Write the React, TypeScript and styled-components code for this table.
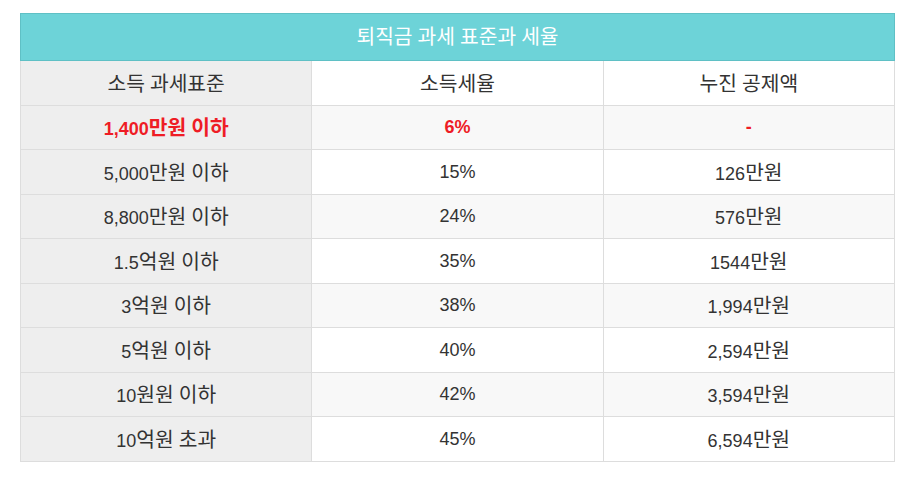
import styled, { createGlobalStyle } from 'styled-components';

const GlobalStyle = createGlobalStyle`
    body {
        margin: 0;
        background: #ffffff;
        font-family: "Liberation Sans", Arial, "Noto Sans CJK KR", sans-serif;
    }
`;

const Page = styled.div`
    padding: 13px 14px 16px 20px;
`;

const Table = styled.table`
    width: 875px;
    border-collapse: collapse;
    table-layout: fixed;
    color: #333333;
    font-size: 18px;
`;

const TitleCell = styled.th`
    height: 46px;
    padding: 0;
    background: #6dd3d8;
    border: 1px solid #5fc0c5;
    color: #ffffff;
    font-size: 18px;
    font-weight: normal;
    text-align: center;
`;

const Cell = styled.td<{ $first?: boolean; $striped?: boolean; $highlight?: boolean }>`
    height: 43.5px;
    padding: 0;
    text-align: center;
    line-height: 1;
    border: 1px solid #dddddd;
    background: ${({ $first, $striped }) => ($first ? '#eeeeee' : $striped ? '#f8f8f8' : '#ffffff')};
    color: ${({ $highlight }) => ($highlight ? '#ee1c25' : '#333333')};
    font-weight: ${({ $highlight }) => ($highlight ? 'bold' : 'normal')};
`;

// hangul glyphs in the original render a bit larger than the latin digits
const Hangul = styled.span`
    font-family: "Noto Sans CJK KR", sans-serif;
    font-size: 1.13em;
    line-height: 1;
`;

const Mixed = ({ text }: { text: string }) => (
    <>
        {text.split(/([가-힣]+)/).map((part, i) =>
            /[가-힣]/.test(part) ? <Hangul key={i}>{part}</Hangul> : part
        )}
    </>
);

const rows = [
    ['소득 과세표준', '소득세율', '누진 공제액'],
    ['1,400만원 이하', '6%', '-'],
    ['5,000만원 이하', '15%', '126만원'],
    ['8,800만원 이하', '24%', '576만원'],
    ['1.5억원 이하', '35%', '1544만원'],
    ['3억원 이하', '38%', '1,994만원'],
    ['5억원 이하', '40%', '2,594만원'],
    ['10원원 이하', '42%', '3,594만원'],
    ['10억원 초과', '45%', '6,594만원'],
];

const App = () => (
    <Page>
        <GlobalStyle />
        <Table>
            <thead>
                <tr>
                    <TitleCell colSpan={3}>
                        <Mixed text='퇴직금 과세 표준과 세율' />
                    </TitleCell>
                </tr>
            </thead>
            <tbody>
                {rows.map((row, i) => (
                    <tr key={i}>
                        {row.map((text, j) => (
                            <Cell key={j} $first={j === 0} $striped={i % 2 === 1} $highlight={i === 1}>
                                <Mixed text={text} />
                            </Cell>
                        ))}
                    </tr>
                ))}
            </tbody>
        </Table>
    </Page>
);

export default App;
